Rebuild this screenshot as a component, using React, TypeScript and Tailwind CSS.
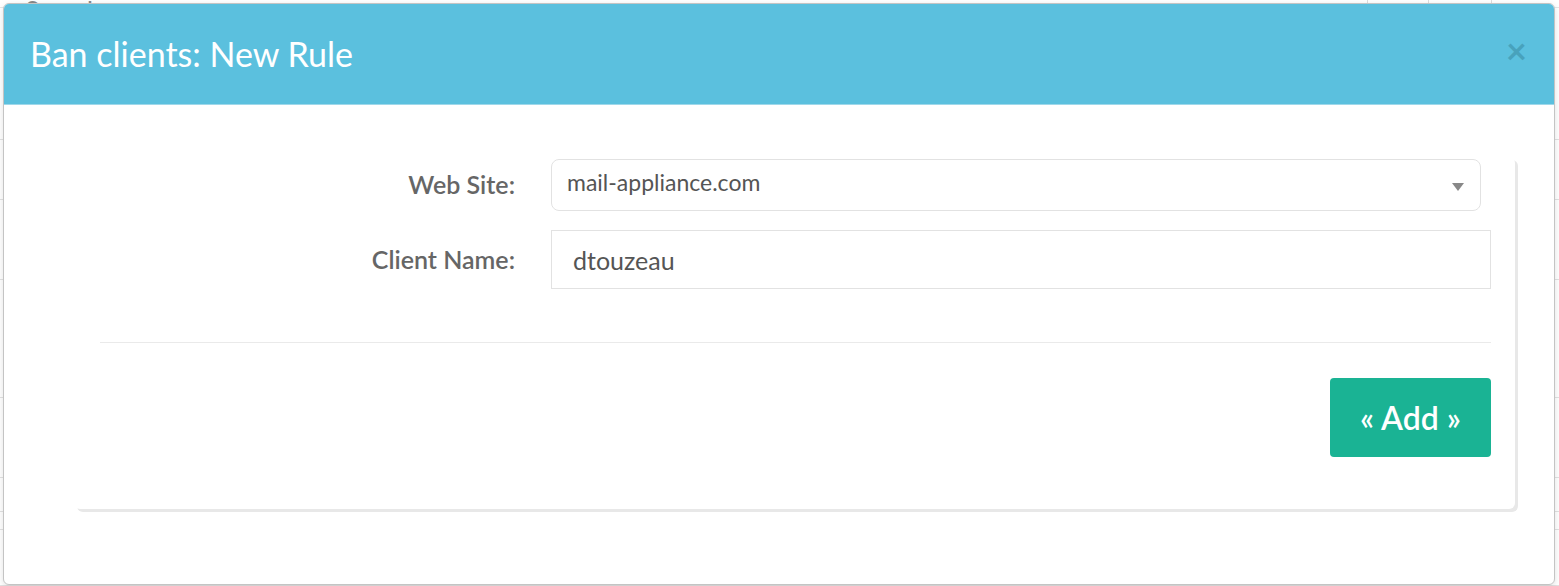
import { useState } from "react";

const lato = { fontFamily: "Lato, 'Open Sans', 'Liberation Sans', sans-serif" };

function BackgroundPage() {
  // faint table rows of the page that sits behind the dialog
  const rows = [132, 60, 80, 118, 80, 34, 18, 56];
  return (
    <div className="w-full h-full bg-white" style={lato}>
      <div className="flex items-end h-[8px] overflow-hidden border-b border-[#e6e6e6]">
        <span className="pl-[25px] text-[26px] leading-[26px] text-[#8a8a8a] translate-y-[17px]">
          Search
        </span>
        <div className="ml-auto flex h-full">
          <div className="w-[61px] border-l border-[#ddd]" />
          <div className="w-[63px] border-l border-[#ddd]" />
          <div className="w-[68px] border-l border-[#ddd]" />
        </div>
      </div>
      {rows.map((h, i) => (
        <div
          key={i}
          className="border-b border-[#e2e2e2]"
          style={{ height: h }}
        />
      ))}
    </div>
  );
}

export default function App() {
  const [site] = useState("mail-appliance.com");
  const [client, setClient] = useState("dtouzeau");

  return (
    <div className="relative w-[1559px] h-[586px] overflow-hidden bg-white">
      <BackgroundPage />

      <div
        className="absolute left-[3px] top-[3px] w-[1552px] h-[582px] bg-white border border-[#c4c4c4] rounded-[6px] overflow-hidden shadow-[0_2px_6px_rgba(0,0,0,0.12)] flex flex-col"
        style={lato}
      >
        <div className="h-[101px] shrink-0 bg-[#5bc0de] border-b border-[#9fd8ea] flex items-center pl-[26px] pr-[27px]">
          <h2 className="text-[34px] leading-none text-white font-normal">
            Ban clients: New Rule
          </h2>
          <button className="ml-auto text-[36px] leading-none font-bold text-[#48a2bc] cursor-pointer -mt-[8px]">
            ×
          </button>
        </div>

        <div className="pt-[52px] pl-[70px] pr-[39px]">
          <div className="bg-white rounded-[6px] shadow-[3px_3px_0_#e8e8e8] pt-[2px] pl-[26px] pr-[24px] pb-[52px]">
            <div className="flex items-center">
              <label className="w-[451px] pr-[36px] text-right text-[25px] font-semibold text-[#666]">
                Web Site:
              </label>
              <div className="relative w-[930px] h-[52px] rounded-[8px] border border-[#e2e2e2] flex items-center pl-[15px] pr-[16px]">
                <span className="text-[23px] text-[#555] -mt-[6px]">{site}</span>
                <span className="ml-auto w-0 h-0 border-l-[6px] border-r-[6px] border-t-[8px] border-l-transparent border-r-transparent border-t-[#888] mt-[4px]" />
              </div>
            </div>

            <div className="flex items-center mt-[19px]">
              <label className="w-[451px] pr-[36px] text-right text-[25px] font-semibold text-[#666]">
                Client Name:
              </label>
              <input
                value={client}
                onChange={(e) => setClient(e.target.value)}
                className="flex-1 h-[59px] border border-[#e2e2e2] px-[21px] text-[25px] text-[#555] outline-none"
                style={lato}
              />
            </div>

            <div className="mt-[53px] border-t border-[#eaeaea]" />

            <div className="flex justify-end mt-[35px]">
              <button className="w-[161px] h-[79px] rounded-[4px] bg-[#1ab394] text-white text-[32px] font-semibold cursor-pointer">
                « Add »
              </button>
            </div>
          </div>
        </div>
      </div>
    </div>
  );
}
